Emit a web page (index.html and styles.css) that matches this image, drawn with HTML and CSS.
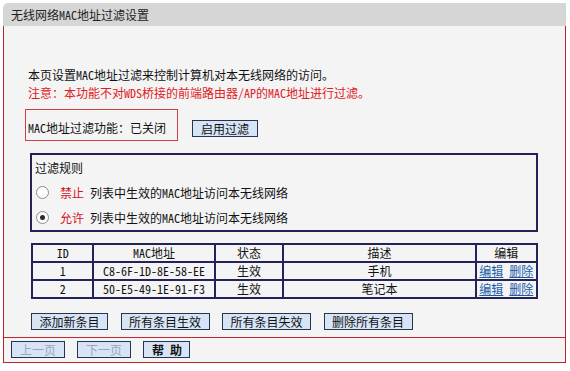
FILE: index.html
```html
<!DOCTYPE html>
<html lang="zh-CN">
<head>
  <meta charset="UTF-8">
  <title>无线网络MAC地址过滤设置</title>
  <link rel="stylesheet" href="styles.css">
</head>
<body>
  <div class="page">
    <div class="title">无线网络MAC地址过滤设置</div>
    <div class="panel">
      <div class="main">
        <p class="intro">本页设置MAC地址过滤来控制计算机对本无线网络的访问。</p>
        <p class="intro warn">注意：本功能不对WDS桥接的前端路由器/AP的MAC地址进行过滤。</p>

        <div class="status-row">
          <div class="status">MAC地址过滤功能：已关闭</div>
          <button class="btn btn-enable">启用过滤</button>
        </div>

        <div class="rules">
          <div class="rules-title">过滤规则</div>
          <label class="rule"><input type="radio" name="rule" class="radio"><span class="red">禁止</span>列表中生效的MAC地址访问本无线网络</label>
          <label class="rule"><input type="radio" name="rule" class="radio" checked><span class="red">允许</span>列表中生效的MAC地址访问本无线网络</label>
        </div>

        <table class="list">
          <tr>
            <td class="c-id">ID</td>
            <td class="c-mac">MAC地址</td>
            <td class="c-st">状态</td>
            <td class="c-desc">描述</td>
            <td class="c-edit">编辑</td>
          </tr>
          <tr>
            <td>1</td>
            <td>C8-6F-1D-8E-58-EE</td>
            <td>生效</td>
            <td>手机</td>
            <td><a href="#">编辑</a> <a href="#">删除</a></td>
          </tr>
          <tr>
            <td>2</td>
            <td>50-E5-49-1E-91-F3</td>
            <td>生效</td>
            <td>笔记本</td>
            <td><a href="#">编辑</a> <a href="#">删除</a></td>
          </tr>
        </table>

        <div class="actions">
          <button class="btn btn-add">添加新条目</button>
          <button class="btn">所有条目生效</button>
          <button class="btn">所有条目失效</button>
          <button class="btn">删除所有条目</button>
        </div>
      </div>

      <div class="footer">
        <button class="btn btn-page" disabled>上一页</button>
        <button class="btn btn-page" disabled>下一页</button>
        <button class="btn btn-help">帮 助</button>
      </div>
    </div>
  </div>
</body>
</html>
```

FILE: styles.css
```css
body {
  margin: 0;
  padding: 0;
  background: #fff;
  color: #111;
  font-family: "Noto Sans Mono CJK SC", "Noto Sans CJK SC", sans-serif;
  font-size: 12px;
}
.page {
  width: 563px;
  margin: 3px 0 0 3px;
}
.title {
  height: 23px;
  line-height: 23px;
  padding-left: 8px;
  background: #d6d6d6;
  border-top-left-radius: 5px;
  color: #222;
}
.panel {
  background: #f4f4f5;
  border-left: 1px solid #b8262b;
  border-right: 1px solid #b8262b;
  border-bottom: 1px solid #b8262b;
}
.main {
  padding: 40px 0 7px 0;
  border-bottom: 1px solid #c1272d;
}
.intro {
  margin: 0 0 0 24px;
  line-height: 18px;
}
.warn {
  color: #e0201c;
}
.status-row {
  display: flex;
  align-items: flex-start;
  margin: 7px 0 0 21px;
}
.status {
  width: 149px;
  height: 21px;
  padding: 9px 0 0 2px;
  line-height: 18px;
  border: 1px solid #d04040;
}
.btn {
  box-sizing: border-box;
  white-space: nowrap;
  font-family: "Noto Sans Mono CJK SC", "Noto Sans CJK SC", sans-serif;
  font-size: 12px;
  height: 17px;
  line-height: 15px;
  padding: 0 8px;
  margin: 0;
  color: #111;
  background: #d6e4f6;
  border: 1px solid #26344e;
  border-radius: 0;
  cursor: pointer;
}
.btn-enable {
  margin: 11px 0 0 14px;
  width: 66px;
}
.rules {
  width: 504px;
  margin: 12px 0 0 26px;
  border: 2px solid #23235a;
}
.rules-title {
  line-height: 25px;
  padding-left: 3px;
}
.rule {
  display: flex;
  align-items: center;
  height: 25px;
  padding-left: 4px;
}
.radio {
  appearance: none;
  width: 13px;
  height: 13px;
  margin: 0 11px 0 0;
  border: 1px solid #8c8c8c;
  border-radius: 50%;
  background: #fdfdfd;
  position: relative;
}
.radio:checked::after {
  content: "";
  position: absolute;
  left: 3px;
  top: 3px;
  width: 5px;
  height: 5px;
  border-radius: 50%;
  background: #2a2a2a;
}
.red {
  color: #d4101a;
  margin-right: 6px;
}
.list {
  width: 507px;
  margin: 11px 0 0 27px;
  border-collapse: collapse;
  text-align: center;
}
.list td {
  border: 2px solid #23235a;
  height: 16px;
  line-height: 16px;
  padding: 0;
}
.c-id { width: 60px; }
.c-mac { width: 121px; }
.c-st { width: 67px; }
.c-desc { width: 193px; }
.c-edit { width: 60px; }
.list a {
  color: #1b5ca8;
}
.actions {
  display: flex;
  gap: 12.5px;
  margin: 14px 0 0 27px;
}
.actions .btn {
  width: 89px;
  padding: 0;
}
.actions .btn-add {
  width: 77px;
}
.footer {
  display: flex;
  gap: 12px;
  padding: 3px 0 4px 7px;
}
.btn-page {
  width: 54px;
  color: #9aa6b8;
  cursor: default;
}
.btn-help {
  width: 47px;
  font-weight: bold;
}
```
